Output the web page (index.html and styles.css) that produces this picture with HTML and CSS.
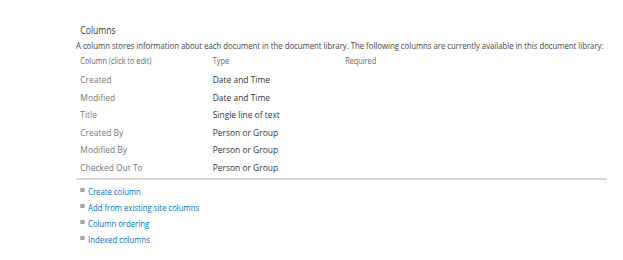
FILE: index.html
```html
<!DOCTYPE html>
<html lang="en">
<head>
    <meta charset="UTF-8">
    <title>Document Library Settings</title>
    <link rel="stylesheet" href="styles.css">
</head>
<body>
    <!--columns section-->
    <div class="section">
        <h3 class="section-title">Columns</h3>
        <p class="section-desc">A column stores information about each document in the document library. The following columns are currently available in this document library:</p>

        <table class="columns-table">
            <tr class="head-row">
                <th class="col-name">Column (click to edit)</th>
                <th class="col-type">Type</th>
                <th>Required</th>
            </tr>
            <tr><td class="col-name">Created</td><td class="col-type">Date and Time</td><td></td></tr>
            <tr><td class="col-name">Modified</td><td class="col-type">Date and Time</td><td></td></tr>
            <tr><td class="col-name">Title</td><td class="col-type">Single line of text</td><td></td></tr>
            <tr><td class="col-name">Created By</td><td class="col-type">Person or Group</td><td></td></tr>
            <tr><td class="col-name">Modified By</td><td class="col-type">Person or Group</td><td></td></tr>
            <tr><td class="col-name">Checked Out To</td><td class="col-type">Person or Group</td><td></td></tr>
        </table>

        <div class="divider"></div>

        <!--links for column actions-->
        <ul class="action-list">
            <li><a href="#">Create column</a></li>
            <li><a href="#">Add from existing site columns</a></li>
            <li><a href="#">Column ordering</a></li>
            <li><a href="#">Indexed columns</a></li>
        </ul>
    </div>
</body>
</html>
```

FILE: styles.css
```css
/*page base*/
body {
    font-family: "Open Sans", "Noto Sans", sans-serif;
    margin: 0;
    padding: 0;
    background-color: #ffffff;
    color: #444;
    overflow-x: hidden;
}

/*the settings page is drawn a little narrow, so squeeze the section sideways*/
.section {
    margin-left: 76px;
    padding-top: 23px;
    width: 617px;
    transform: scaleX(0.86);
    transform-origin: 0 0;
}

.section-title {
    font-size: 10px;
    font-weight: normal;
    margin: 0 0 0 5px;
    line-height: 14px;
    color: #3b3b3b;
}

.section-desc {
    font-size: 9px;
    margin: 2px 0 0;
    line-height: 13px;
    color: #444;
    white-space: nowrap;
}

.columns-table {
    border-collapse: collapse;
    margin: 2px 0 0 5px;
}

.columns-table th {
    font-weight: normal;
    font-size: 8.5px;
    color: #666;
    text-align: left;
    padding: 0;
    height: 14px;
    line-height: 14px;
}

.columns-table td {
    font-size: 9.8px;
    padding: 0;
    height: 17.6px;
    line-height: 17.6px;
}

.col-name {
    width: 154px;
    color: #777;
}

.col-type {
    width: 154px;
    color: #333;
}

.head-row th {
    padding-bottom: 3px;
}

.divider {
    height: 2px;
    background-color: #d6d6d6;
    margin-top: 1px;
}

.action-list {
    list-style: none;
    margin: 4px 0 0 5px;
    padding: 0;
}

.action-list li {
    display: flex;
    align-items: center;
    height: 16px;
    font-size: 9px;
}

.action-list li::before {
    content: "";
    width: 5px;
    height: 4px;
    background-color: #a0a0a0;
    margin-right: 4px;
    margin-top: -3px;
}

.action-list a {
    color: #0072c6;
    text-decoration: none;
}
```
